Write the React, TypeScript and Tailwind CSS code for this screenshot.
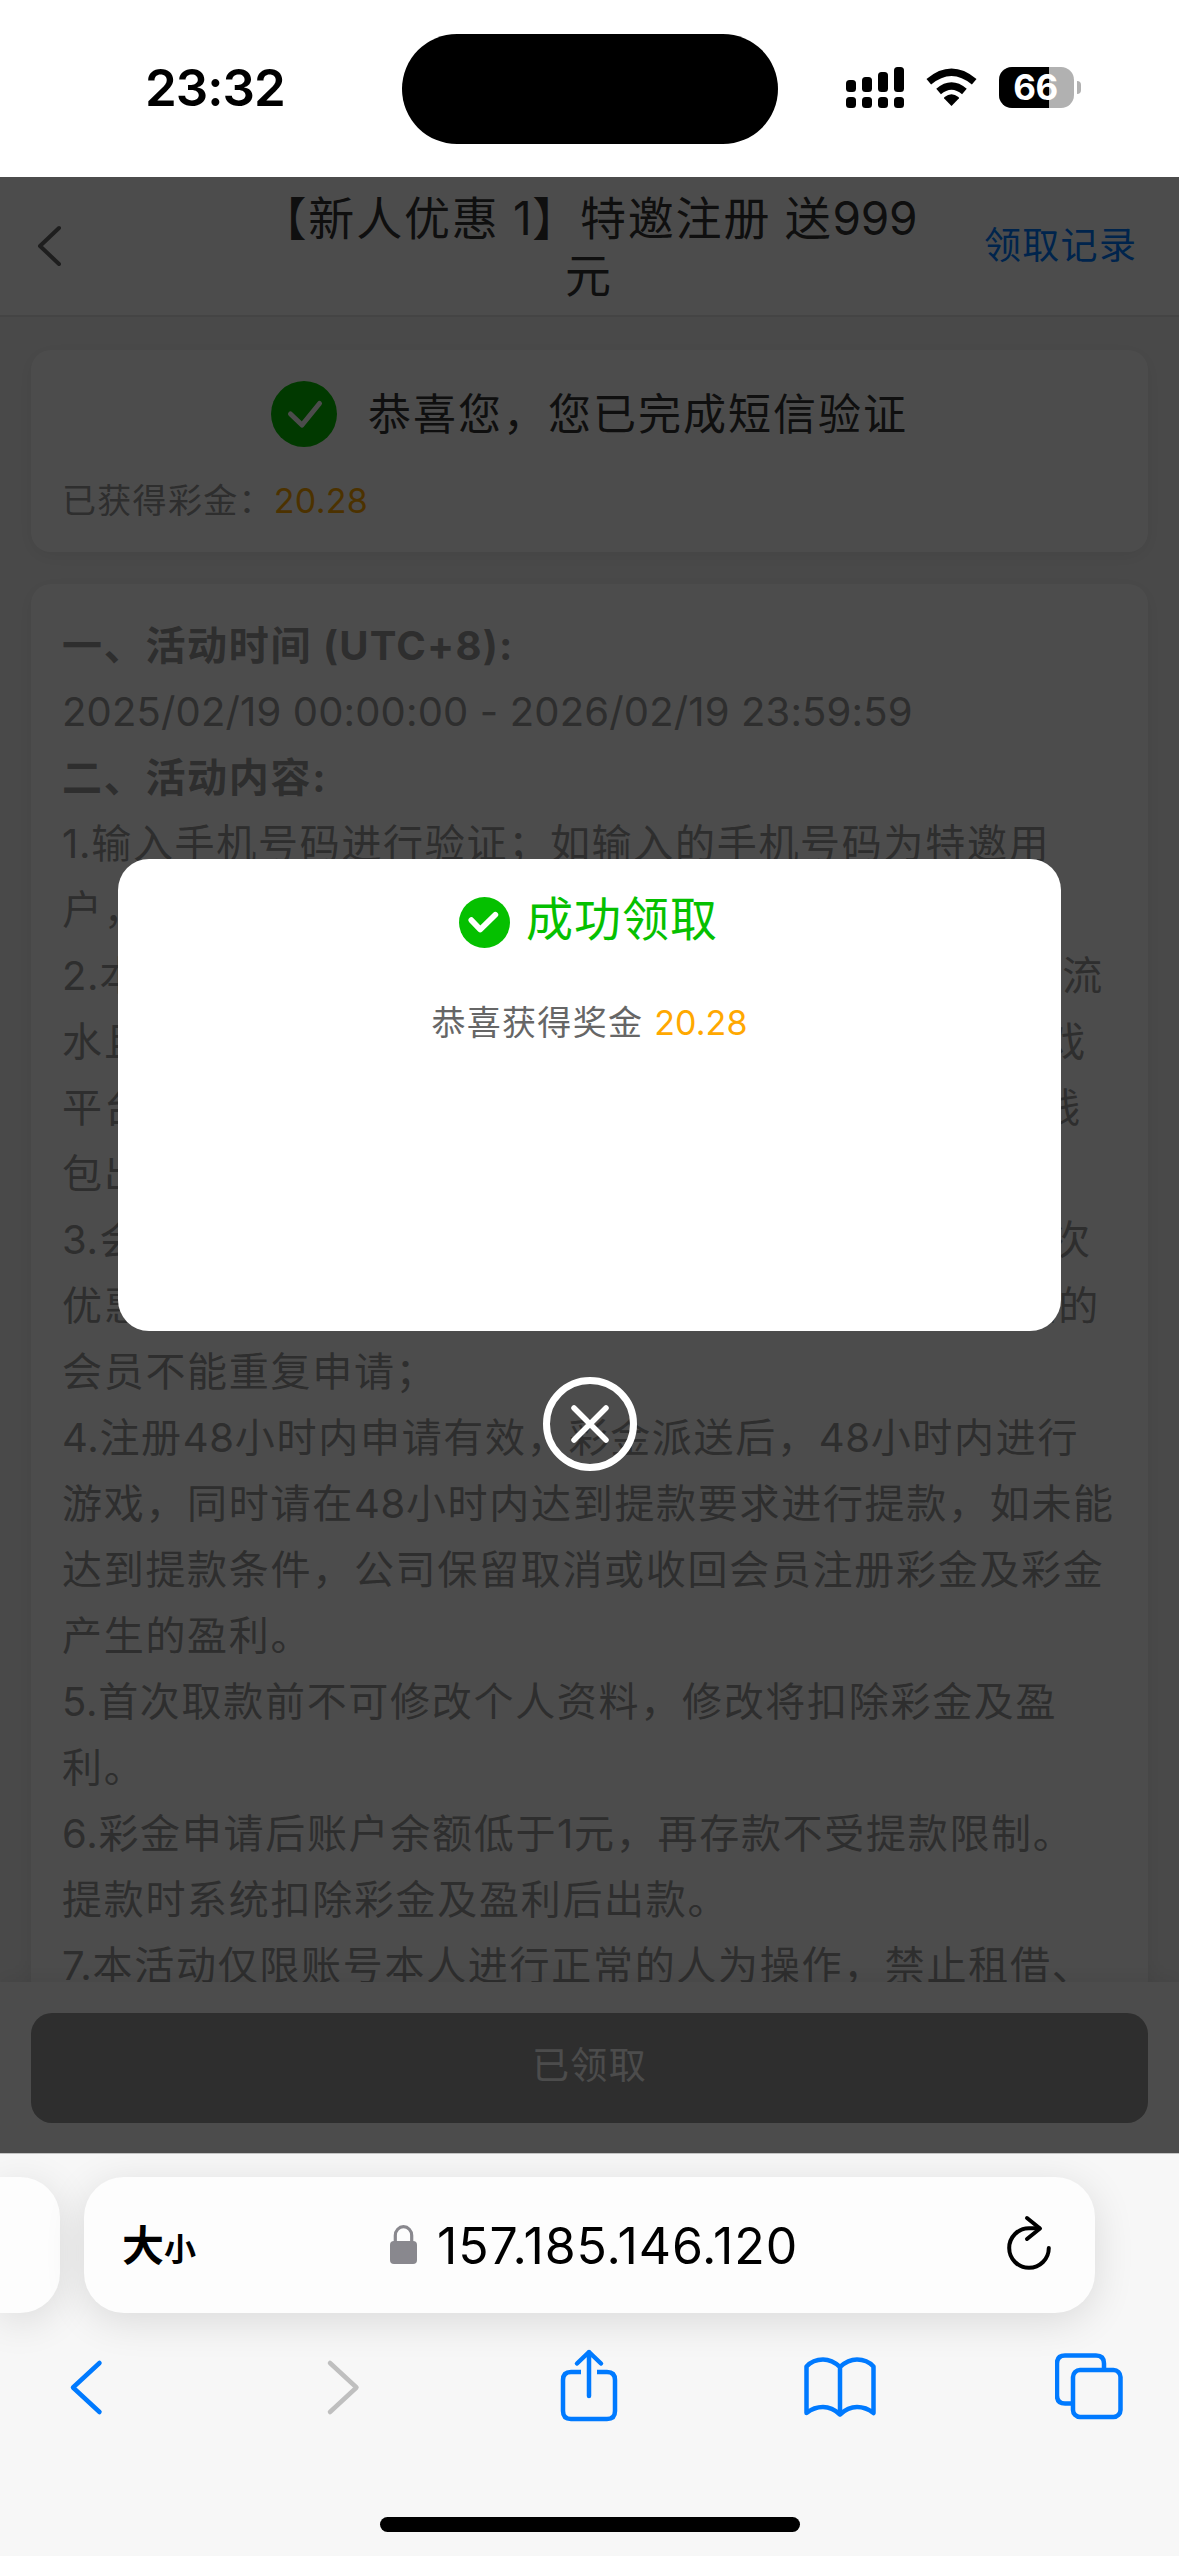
import type { ReactNode } from "react";

type Line = {
  text: string;
  bold?: boolean;
  width?: string;
};

// Terms of the promotion, one entry per rendered line
const lines: Line[] = [
  { text: "一、活动时间 (UTC+8):", bold: true },
  { text: "2025/02/19 00:00:00 - 2026/02/19 23:59:59" },
  { text: "二、活动内容:", bold: true },
  { text: "1.输入手机号码进行验证；如输入的手机号码为特邀用" },
  { text: "户，即可领取注册彩金；" },
  { text: "2.本活动所得彩金需在场馆内进行游戏，达到三倍有效流", width: "w-[1042px]" },
  { text: "水且余额低于1元即可申请提款，仅限于指定的场馆游戏", width: "w-[1025px]" },
  { text: "平台进行投注，其他平台投注均不计算，每人限1个主钱", width: "w-[1020px]" },
  { text: "包出款。" },
  { text: "3.会员每1个姓名、手机、银行卡、设备号仅可申请一次", width: "w-[1030px]" },
  { text: "优惠，同一会员仅限一个账号参与，已领取100元彩金的", width: "w-[1038px]" },
  { text: "会员不能重复申请；" },
  { text: "4.注册48小时内申请有效，彩金派送后，48小时内进行" },
  { text: "游戏，同时请在48小时内达到提款要求进行提款，如未能" },
  { text: "达到提款条件，公司保留取消或收回会员注册彩金及彩金" },
  { text: "产生的盈利。" },
  { text: "5.首次取款前不可修改个人资料，修改将扣除彩金及盈" },
  { text: "利。" },
  { text: "6.彩金申请后账户余额低于1元，再存款不受提款限制。" },
  { text: "提款时系统扣除彩金及盈利后出款。" },
  { text: "7.本活动仅限账号本人进行正常的人为操作，禁止租借、" },
];

// Latin runs are set tighter than the Chinese text around them
function Mixed({ text, bold }: { text: string; bold?: boolean }) {
  const parts = text.split(/([\x20-\x7e]+)/);
  const alone = parts.every((part, i) => i % 2 === 1 || part === "");
  const tracking = bold ? "tracking-[1.2px]" : alone ? "tracking-[0.15px]" : "tracking-[0.7px]";

  return parts.map((part, i) =>
    i % 2 === 1 ? (
      <span key={i} className={tracking}>
        {part}
      </span>
    ) : (
      part
    )
  );
}

function StatusBar() {
  return (
    <header className="flex h-[177px] items-start bg-white">
      <div className="mt-[57px] w-[402px] pl-[145px] text-[51px] leading-[62px] font-semibold tracking-[-1px]">
        23:32
      </div>
      <div className="mt-[34px] h-[110px] w-[376px] rounded-full bg-black" />
      <div className="mt-[67px] ml-[68px] flex h-[41px]">
        <svg width="58" height="41" viewBox="0 0 58 41">
          <rect x="0" y="13" width="10" height="12" rx="3.5" />
          <rect x="16" y="10" width="10" height="15" rx="3.5" />
          <rect x="32" y="5" width="10" height="20" rx="3.5" />
          <rect x="48" y="0" width="10" height="25" rx="3.5" />
          <rect x="0" y="30" width="10" height="11" rx="3.5" />
          <rect x="16" y="30" width="10" height="11" rx="3.5" />
          <rect x="32" y="30" width="10" height="11" rx="3.5" />
          <rect x="48" y="30" width="10" height="11" rx="3.5" />
        </svg>
        <svg className="ml-[22px]" width="51" height="41" viewBox="0 0 51 41">
          <path d="M25.5 39 L18.2 31.6 Q17.6 30.8 18.6 30 Q25.5 24.6 32.4 30 Q33.4 30.8 32.8 31.6 Z" />
          <path d="M12.6 24.6 Q25.5 13.6 38.4 24.6" fill="none" stroke="black" strokeWidth="7.2" />
          <path d="M2.8 14.8 Q25.5 -4.2 48.2 14.8" fill="none" stroke="black" strokeWidth="7.2" />
        </svg>
        <div className="relative ml-[22px] flex h-[41px] w-[75px] items-center justify-center overflow-hidden rounded-[13px] bg-[#b1b1b1]">
          <div className="absolute inset-y-0 left-0 w-[50px] bg-black" />
          <span className="relative pr-[2px] text-[35px] leading-none font-bold tracking-[-0.5px] text-white">66</span>
        </div>
        <div className="mt-[14px] ml-[3px] h-[13px] w-[4px] rounded-r-full bg-[#b1b1b1]" />
      </div>
    </header>
  );
}

function TitleBar() {
  return (
    <div className="flex h-[140px] items-center border-b-2 border-[#e3e3e3] bg-white">
      <svg className="ml-[35px]" width="28" height="44" viewBox="0 0 28 44">
        <path
          d="M24 4 L5 22 L24 40"
          fill="none"
          stroke="#666"
          strokeWidth="4"
          strokeLinecap="round"
          strokeLinejoin="round"
        />
      </svg>
      <h1 className="ml-[186px] w-[680px] pt-[2px] text-center text-[46px] leading-[57px] tracking-[1.8px] whitespace-nowrap text-[#333]">
        <span className="block">
          【新人优惠<span className="tracking-[0.5px]"> 1</span>】特邀注册<span className="tracking-[0.5px]"> </span>送
          <span className="tracking-[-0.2px]">999</span>
        </span>
        <span className="block">元</span>
      </h1>
      <a className="ml-[55px] text-[37px] tracking-[1.3px] whitespace-nowrap text-[#007aff]">领取记录</a>
    </div>
  );
}

function Card({ className, children }: { className: string; children: ReactNode }) {
  return (
    <section className={`mx-[31px] rounded-[20px] bg-white px-[31px] shadow-[0_4px_20px_rgba(0,0,0,0.07)] ${className}`}>
      {children}
    </section>
  );
}

function CheckCircle({ size, stroke }: { size: number; stroke: number }) {
  return (
    <svg width={size} height={size} viewBox="0 0 66 66">
      <circle cx="33" cy="33" r="33" fill="#05c000" />
      <path
        d={stroke > 6 ? "M16 30 L27.5 42 L47 23" : "M19.5 33 L31 44 L48.5 22.5"}
        fill="none"
        stroke="white"
        strokeWidth={stroke}
        strokeLinecap="round"
        strokeLinejoin="round"
      />
    </svg>
  );
}

function PromoPage() {
  return (
    <main className="relative flex h-[1976px] flex-col overflow-hidden bg-[#f5f5f5]">
      <TitleBar />
      <div className="flex min-h-0 flex-1 flex-col gap-[32px] overflow-hidden pt-[33px]">
        <Card className="h-[202px] shrink-0 pt-[31px]">
          <div className="flex h-[66px] items-center justify-center">
            <CheckCircle size={66} stroke={5} />
            <span className="ml-[31px] text-[43px] tracking-[2px] text-[#333]">恭喜您，您已完成短信验证</span>
          </div>
          <p className="mt-[32px] text-[34px] leading-[44px] tracking-[1.3px] text-[#999]">
            已获得彩金：<span className="tracking-[0.3px] text-[#ffa800]">20.28</span>
          </p>
        </Card>
        <Card className="shrink-0 pt-[29px]">
          {lines.map((line) => (
            <p
              key={line.text}
              className={`h-[66px] text-[40px] leading-[66px] tracking-[1.7px] whitespace-nowrap text-[#999] ${
                line.bold ? "font-bold" : ""
              } ${line.width ? `${line.width} [text-align-last:justify]` : ""}`}
            >
              <Mixed text={line.text} bold={line.bold} />
            </p>
          ))}
        </Card>
      </div>
      <footer className="relative h-[171px] shrink-0 bg-white px-[31px] pt-[31px] shadow-[0_-4px_20px_rgba(0,0,0,0.07)]">
        <button className="h-[110px] w-full rounded-[21px] bg-[#999] pb-[5px] text-[37px] tracking-[1.3px] text-white">
          已领取
        </button>
      </footer>

      {/* Result dialog */}
      <div className="absolute inset-0 flex flex-col items-center bg-black/70 pt-[682px]">
        <div className="flex h-[472px] w-[943px] shrink-0 flex-col items-center rounded-[31px] bg-white pt-[29px]">
          <div className="flex h-[68px] items-center pr-[2px] text-[47px] leading-[68px] tracking-[1px] text-[#05c000]">
            <CheckCircle size={51} stroke={7.5} />
            <span className="ml-[16px] pb-[7px]">成功领取</span>
          </div>
          <p className="mt-[45px] text-[34px] leading-[44px] tracking-[1.3px] text-[#666]">
            恭喜获得奖金 <span className="tracking-[0.1px] text-[#ffa800]">20.28</span>
          </p>
        </div>
        <svg className="mt-[46px]" width="94" height="94" viewBox="0 0 94 94">
          <circle cx="47" cy="47" r="43.5" fill="none" stroke="white" strokeWidth="7" />
          <path d="M31 31 L63 63 M63 31 L31 63" stroke="white" strokeWidth="5.5" strokeLinecap="round" />
        </svg>
      </div>
    </main>
  );
}

function AddressBar() {
  return (
    <div className="flex h-[136px] gap-[24px]">
      <div className="w-[60px] rounded-r-[40px] bg-[#fdfdfd] shadow-[0_8px_40px_rgba(0,0,0,0.12)]" />
      <div className="flex w-[1011px] items-center rounded-[40px] bg-[#fdfdfd] shadow-[0_8px_40px_rgba(0,0,0,0.12)]">
        <div className="flex w-[306px] items-baseline pl-[38px] font-bold">
          <span className="text-[42px]">大</span>
          <span className="text-[32px]">小</span>
        </div>
        <svg width="27" height="40" viewBox="0 0 27 40">
          <rect x="0" y="16" width="27" height="23" rx="4" fill="#89888e" />
          <path d="M5.3 18 V10.5 A8.2 8.8 0 0 1 21.7 10.5 V18" fill="none" stroke="#89888e" strokeWidth="3.2" />
        </svg>
        <span className="mt-[2px] ml-[20px] w-[568px] text-[50px] tracking-[0.9px]">157.185.146.120</span>
        <svg className="mt-[-6px]" width="48" height="56" viewBox="0 0 48 56" fill="none" stroke="black" strokeWidth="4" strokeLinecap="round" strokeLinejoin="round">
          <path d="M34 14.2 H24 A19.8 19.8 0 1 0 43.8 34" />
          <path d="M22 4 L35 14.5 L22 25" />
        </svg>
      </div>
    </div>
  );
}

function Toolbar() {
  return (
    <nav className="mt-[33px] flex h-[84px] items-center justify-between px-[52px] [&>svg]:fill-none [&>svg]:stroke-[#007aff] [&>svg]:stroke-[4.5]">
      <svg className="ml-[-1px]" width="72" height="80" viewBox="0 0 72 80" strokeLinecap="round" strokeLinejoin="round">
        <path d="M48.5 15 L22 39.5 L48.5 64" />
      </svg>
      <svg width="72" height="80" viewBox="0 0 72 80" strokeLinecap="round" strokeLinejoin="round">
        <path d="M28 15 L54.5 39.5 L28 64" stroke="#bfbfbf" />
      </svg>
      <svg width="72" height="80" viewBox="0 0 72 80" strokeLinejoin="round">
        <path d="M28 24 H18 Q10 24 10 32 V63 Q10 71 18 71 H54 Q62 71 62 63 V32 Q62 24 54 24 H44" />
        <path d="M36 48 V4 M24 15.5 L36 4 L48 15.5" strokeLinecap="round" />
      </svg>
      <svg width="72" height="80" viewBox="0 0 72 80" strokeLinecap="round" strokeLinejoin="round">
        <path d="M36 19 Q28 11.5 19 11.5 Q9 11.5 2.5 18.5 V65 Q10 59 19 59 Q28 59 36 66.5 Q44 59 53 59 Q62 59 69.5 65 V18.5 Q63 11.5 53 11.5 Q44 11.5 36 19 V66" />
      </svg>
      <svg width="72" height="80" viewBox="0 0 72 80" strokeLinejoin="round">
        <path d="M17 55.5 H10 Q2 55.5 2 47.5 V15.5 Q2 7.5 10 7.5 H41 Q49 7.5 49 15.5 V21" />
        <rect x="18" y="22" width="47.5" height="47" rx="7" />
      </svg>
    </nav>
  );
}

export default function App() {
  return (
    <div
      lang="zh-CN"
      className="flex h-[2556px] w-[1179px] flex-col overflow-hidden bg-white font-['Inter','Noto_Sans_CJK_SC',sans-serif] text-black"
    >
      <StatusBar />
      <PromoPage />
      <div className="flex flex-1 flex-col border-t border-[#c4c4c4] bg-[#f7f7f7] pt-[23px]">
        <AddressBar />
        <Toolbar />
        <div className="mx-auto mt-[87px] h-[15px] w-[420px] rounded-full bg-black" />
      </div>
    </div>
  );
}
